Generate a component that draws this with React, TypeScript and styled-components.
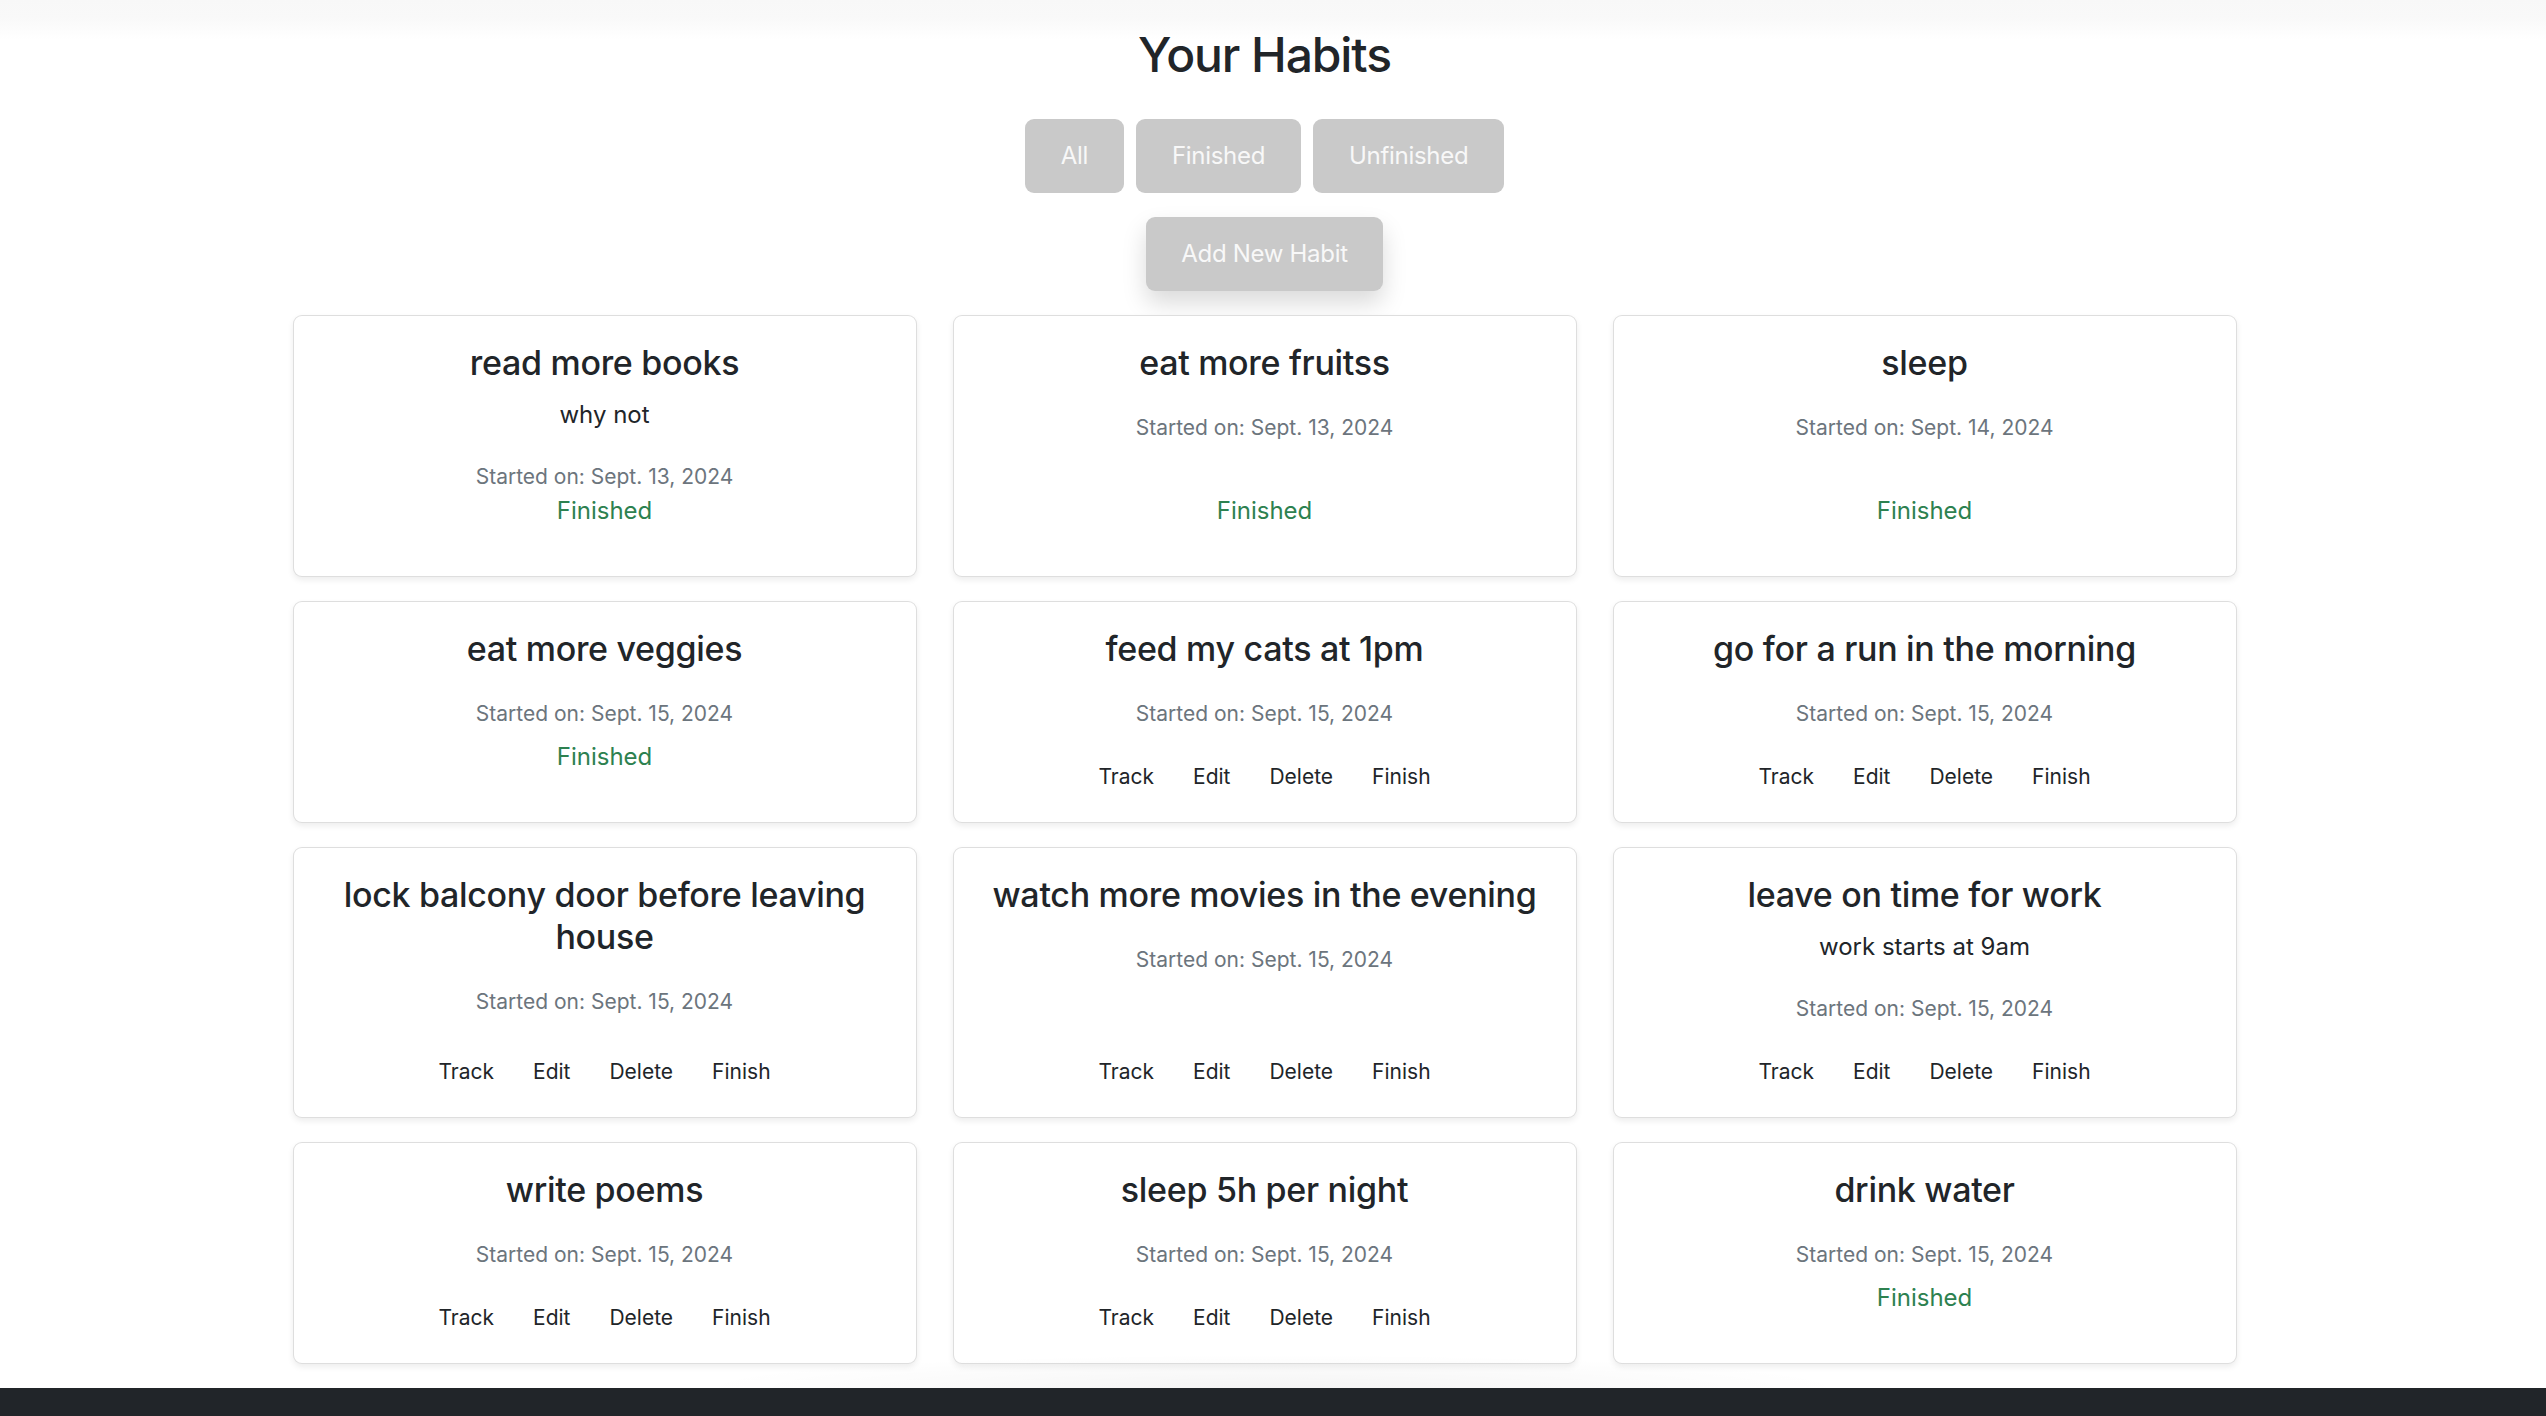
import { createGlobalStyle, styled } from "styled-components"

type Habit = {
  title: string
  description?: string
  started: string
  finished: boolean
}

const habits: Habit[] = [
  { title: "read more books", description: "why not", started: "Sept. 13, 2024", finished: true },
  { title: "eat more fruitss", started: "Sept. 13, 2024", finished: true },
  { title: "sleep", started: "Sept. 14, 2024", finished: true },
  { title: "eat more veggies", started: "Sept. 15, 2024", finished: true },
  { title: "feed my cats at 1pm", started: "Sept. 15, 2024", finished: false },
  { title: "go for a run in the morning", started: "Sept. 15, 2024", finished: false },
  { title: "lock balcony door before leaving house", started: "Sept. 15, 2024", finished: false },
  { title: "watch more movies in the evening", started: "Sept. 15, 2024", finished: false },
  { title: "leave on time for work", description: "work starts at 9am", started: "Sept. 15, 2024", finished: false },
  { title: "write poems", started: "Sept. 15, 2024", finished: false },
  { title: "sleep 5h per night", started: "Sept. 15, 2024", finished: false },
  { title: "drink water", started: "Sept. 15, 2024", finished: true },
]

const GlobalStyle = createGlobalStyle`
  * { box-sizing: border-box; }
  body {
    margin: 0;
    font-family: Inter, "Noto Sans", "Liberation Sans", sans-serif;
    color: #212529;
    background: linear-gradient(#f8f8f8 0, #f9f9f9 18px, #ffffff 40px) no-repeat, #ffffff;
  }
`

const S = {
  Main: styled.main`
    padding-right: 17px;
  `,
  Container: styled.div`
    max-width: 1944px;
    margin: 0 auto;
    display: flex;
    flex-direction: column;
    align-items: center;
  `,
  Heading: styled.h1`
    margin: 26px 0 0;
    font-size: 48px;
    line-height: 57.6px;
    font-weight: 500;
    letter-spacing: -1.1px;
  `,
  FilterBar: styled.div`
    display: flex;
    gap: 12px;
    margin-top: 35px;
  `,
  GreyButton: styled.button<{ $raised?: boolean }>`
    border: 0;
    border-radius: 9px;
    background: #c9c9c9;
    color: #f8f8f8;
    font-family: inherit;
    font-size: 24px;
    line-height: 36px;
    letter-spacing: -0.3px;
    padding: 19px ${({ $raised }) => ($raised ? 35 : 36)}px;
    cursor: pointer;
    box-shadow: ${({ $raised }) => ($raised ? "0 12px 24px rgba(0, 0, 0, 0.15)" : "none")};
  `,
  AddRow: styled.div`
    margin-top: 24px;
  `,
  Grid: styled.div`
    width: 100%;
    margin-top: 24px;
    display: grid;
    grid-template-columns: repeat(3, 1fr);
    column-gap: 36px;
    row-gap: 24px;
  `,
  Card: styled.div`
    display: flex;
    flex-direction: column;
    border: 1px solid rgba(0, 0, 0, 0.13);
    border-radius: 9px;
    background: #fff;
    box-shadow: 0 3px 6px rgba(0, 0, 0, 0.075);
    padding: 26px 24px 25px;
    text-align: center;
  `,
  Body: styled.div`
    display: block;
  `,
  Title: styled.h5`
    margin: 0 0 13px;
    font-size: 34px;
    line-height: 42px;
    font-weight: 500;
    letter-spacing: -0.3px;
  `,
  Description: styled.p`
    margin: 0;
    font-size: 24px;
    line-height: 36px;
  `,
  Started: styled.p`
    margin: 28px 0 0;
    font-size: 21px;
    line-height: 31.5px;
    color: #6c757d;
  `,
  Bottom: styled.div<{ $gap: number }>`
    margin-top: auto;
    padding-top: ${({ $gap }) => $gap}px;
  `,
  Status: styled.p`
    margin: 0 0 22px;
    font-size: 24px;
    line-height: 36px;
    color: #2d8150;
  `,
  Actions: styled.div`
    display: flex;
    justify-content: center;
    gap: 15px;
  `,
  ActionButton: styled.button`
    border: 0;
    background: transparent;
    color: #212529;
    font-family: inherit;
    font-size: 21px;
    line-height: 31.5px;
    padding: 5px 12px;
    cursor: pointer;
  `,
  Footer: styled.footer`
    position: relative;
    margin-top: 24px;
    height: 120px;
    background: #212529;

    &::before {
      content: "";
      position: absolute;
      left: 27%;
      width: 46%;
      bottom: 100%;
      height: 34px;
      pointer-events: none;
      background: radial-gradient(ellipse at 50% 100%, rgba(0, 0, 0, 0.045), rgba(0, 0, 0, 0) 70%);
    }
  `,
}

const HabitCard = ({ habit }: { habit: Habit }) => (
  <S.Card>
    <S.Body>
      <S.Title>{habit.title}</S.Title>
      {habit.description && <S.Description>{habit.description}</S.Description>}
      <S.Started>Started on: {habit.started}</S.Started>
    </S.Body>
    {habit.finished ? (
      <S.Bottom $gap={1}>
        <S.Status>Finished</S.Status>
      </S.Bottom>
    ) : (
      <S.Bottom $gap={26}>
        <S.Actions>
          <S.ActionButton>Track</S.ActionButton>
          <S.ActionButton>Edit</S.ActionButton>
          <S.ActionButton>Delete</S.ActionButton>
          <S.ActionButton>Finish</S.ActionButton>
        </S.Actions>
      </S.Bottom>
    )}
  </S.Card>
)

export default function App() {
  return (
    <>
      <GlobalStyle />
      <S.Main>
        <S.Container>
          <S.Heading>Your Habits</S.Heading>
          <S.FilterBar>
            <S.GreyButton>All</S.GreyButton>
            <S.GreyButton>Finished</S.GreyButton>
            <S.GreyButton>Unfinished</S.GreyButton>
          </S.FilterBar>
          <S.AddRow>
            <S.GreyButton $raised>Add New Habit</S.GreyButton>
          </S.AddRow>
          <S.Grid>
            {habits.map((h) => (
              <HabitCard key={h.title} habit={h} />
            ))}
          </S.Grid>
        </S.Container>
      </S.Main>
      <S.Footer />
    </>
  )
}
